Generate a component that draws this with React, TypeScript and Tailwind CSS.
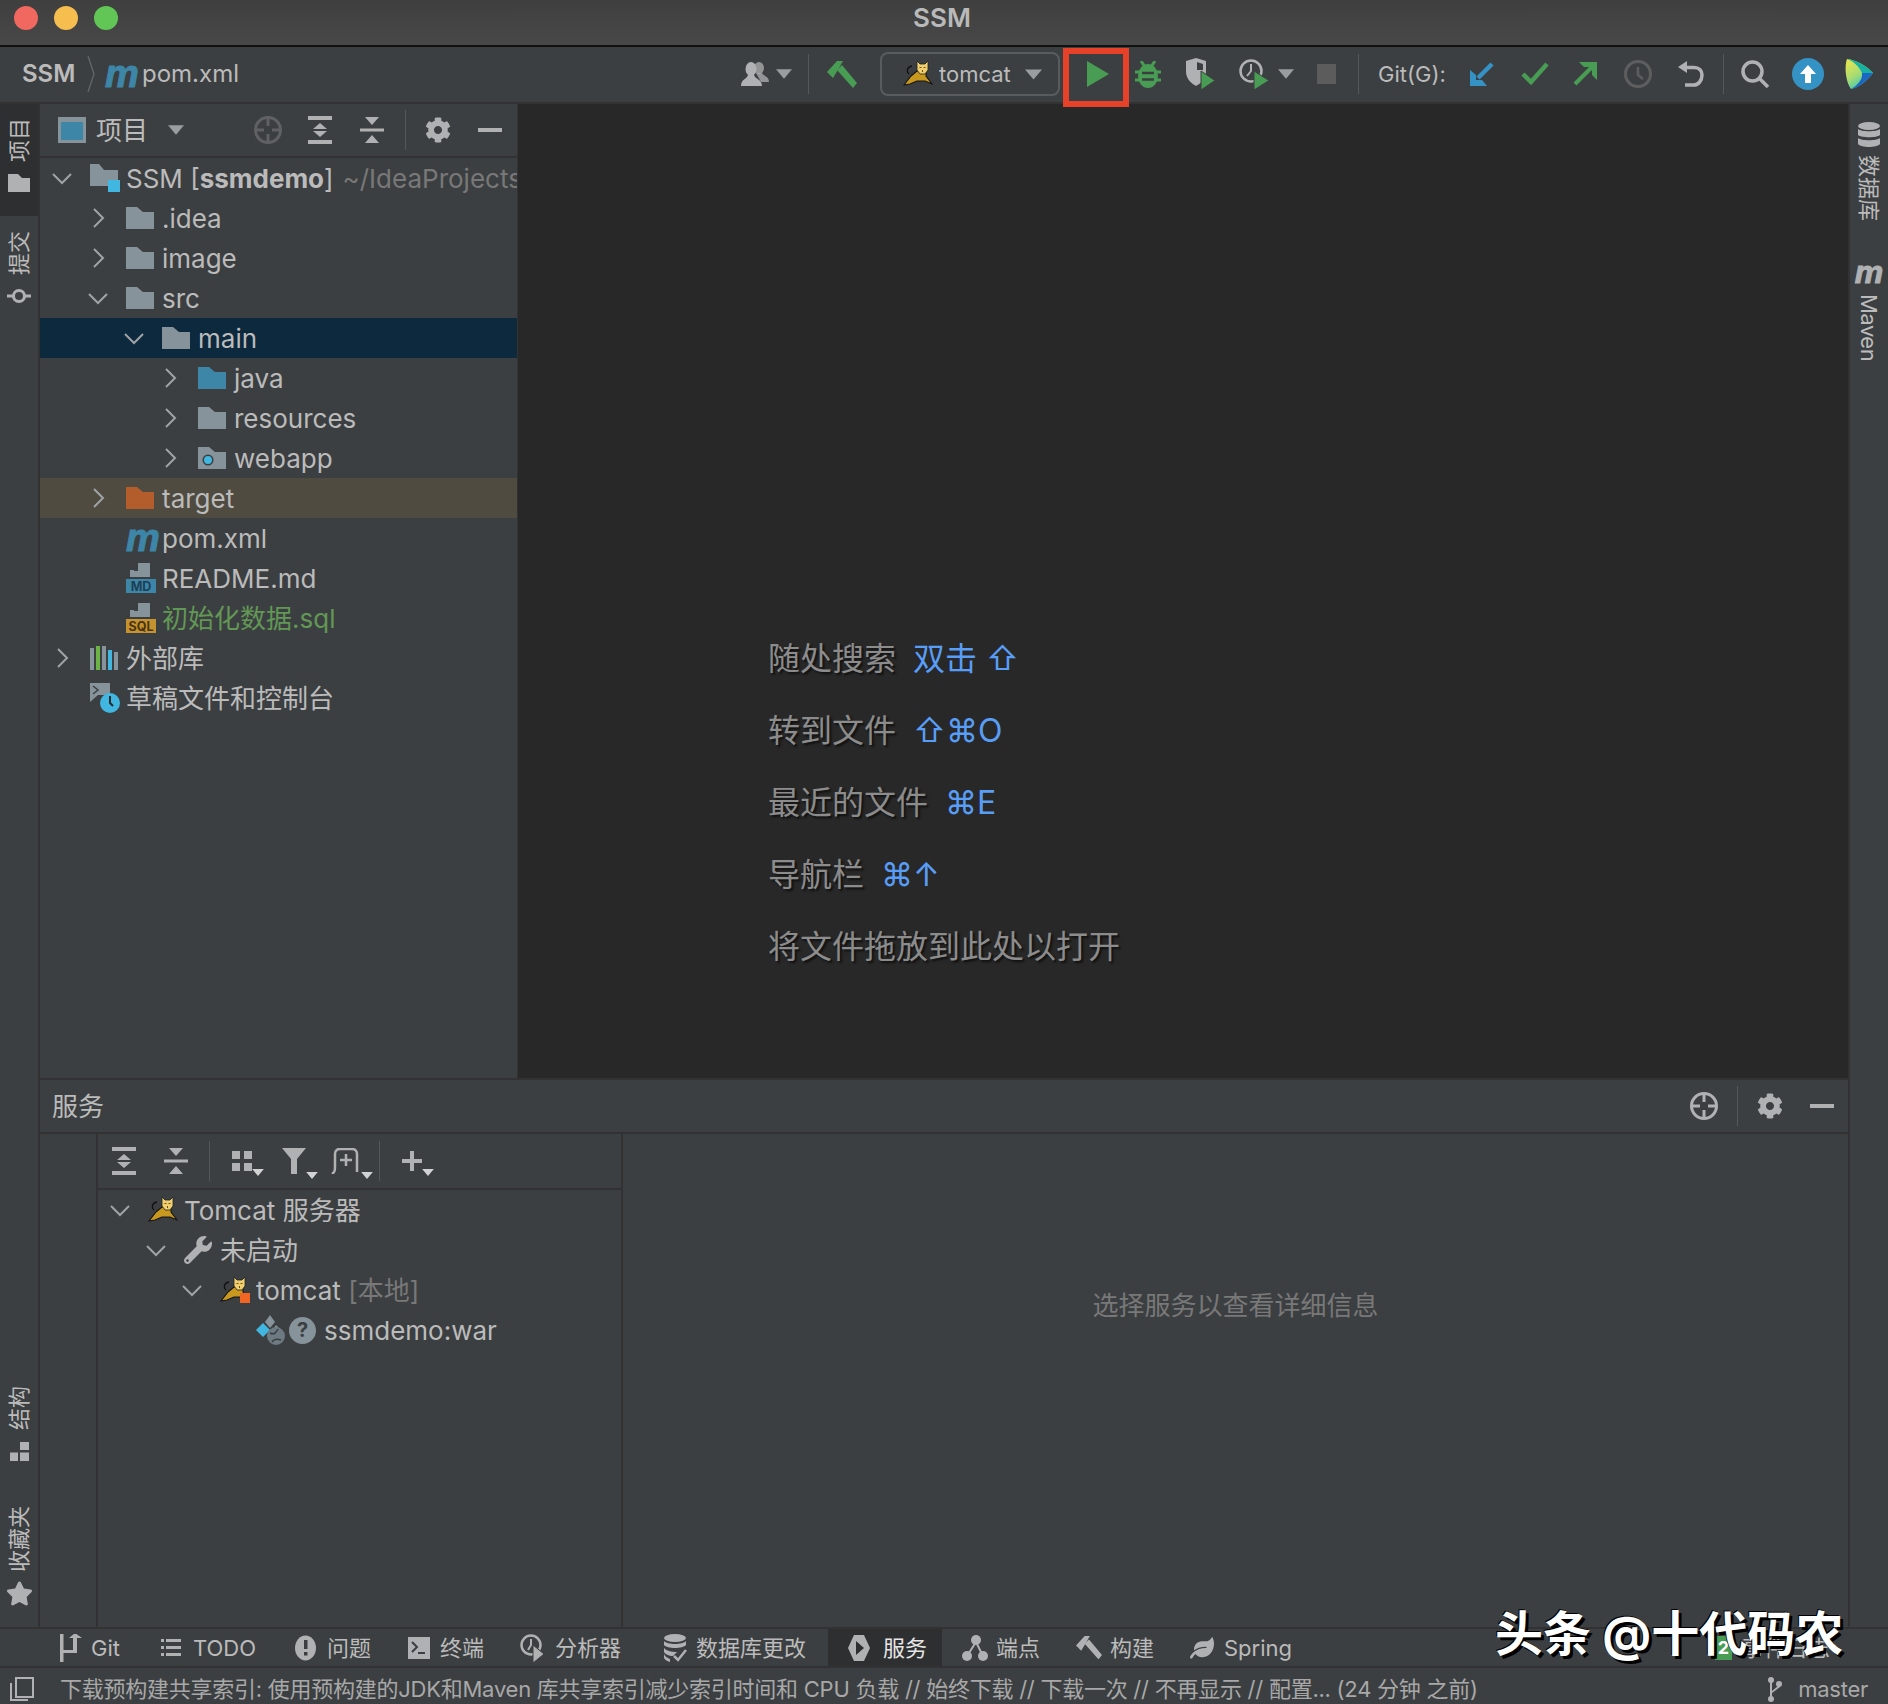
import React from 'react';
import { FaCog, FaWrench, FaStar, FaLeaf } from 'react-icons/fa';

const GRAY = '#afb1b3';
const GREEN = '#499c54';
const BLUE = '#3592c4';
const BG = '#3c3f41';
const FOLDER = '#87939a';

const vertical = '[writing-mode:vertical-rl] [text-orientation:sideways]';

const Folder = ({ color = FOLDER, badge }: { color?: string; badge?: boolean }) => (
  <svg width="28" height="22" viewBox="0 0 28 22">
    <path d="M0 0H11L17 5H28V22H0Z" fill={color} />
    {badge && <circle cx="10" cy="13" r="5.5" fill="#3a3d3f" />}
    {badge && <circle cx="10" cy="13" r="4" fill="#40b6e0" />}
  </svg>
);

const RootFolder = () => (
  <svg width="30" height="28" viewBox="0 0 30 28">
    <path d="M0 0H9L14 6H28V22H0Z" fill={FOLDER} />
    <rect x="18" y="16" width="12" height="12" fill="#40b6e0" />
  </svg>
);

const Chevron = ({ open }: { open?: boolean }) => (
  <svg width="20" height="20" viewBox="0 0 20 20" fill="none" stroke="#a0a3a6" strokeWidth="2">
    <path d={open ? 'M1 6L10 15L19 6' : 'M6 1L15 10L6 19'} />
  </svg>
);

const MavenM = ({ color = '#3d86a8', small }: { color?: string; small?: boolean }) => (
  <span
    className={`font-['Liberation_Sans'] leading-none font-bold italic [-webkit-text-stroke-width:1px] ${small ? 'text-[32px]' : 'text-[38px]'}`}
    style={{ color }}
  >
    m
  </span>
);

const FileBadge = ({ label, color, ink }: { label: string; color: string; ink: string }) => (
  <svg width="30" height="30" viewBox="0 0 30 30">
    <path d="M12 0H24V14H4V7H8V8H12Z" fill={FOLDER} />
    <rect x="0" y="16" width="30" height="14" fill={color} />
    <text x="15" y="27.5" textAnchor="middle" fontSize="12.5" fontWeight="700" fontFamily="Inter" fill={ink}>
      {label}
    </text>
  </svg>
);

const Tomcat = ({ stopped }: { stopped?: boolean }) => (
  <svg width="30" height="26" viewBox="0 0 30 26">
    <path d="M6 13C3 10 4 6 9 5" fill="none" stroke="#111" strokeWidth="1.4" />
    <path d="M1 24L8 15L14 10L23 10L23 15L29 23L22 20L14 20L7 23Z" fill="#c9981f" stroke="#151515" strokeWidth="1.1" />
    <path d="M14 0L17 3H22L25 0L25 9L22 13L17 13L14 9Z" fill="#f0cf6e" stroke="#222" strokeWidth="0.8" />
    <path d="M16.5 6.5h2M20.500 6.5h2M19.500 9v2" stroke="#6b4d10" strokeWidth="1" />
    {stopped && <rect x="20" y="16" width="10" height="10" fill="#f26522" />}
  </svg>
);

const Hammer = ({ color = GREEN, size = 30 }: { color?: string; size?: number }) => (
  <svg width={size} height={size * 0.9} viewBox="0 0 30 27" fill={color}>
    <path d="M0 11L10 0H16L12 7L6 17Z" />
    <path d="M10 9L15 4L30 22L26 27Z" />
  </svg>
);

const Person = () => (
  <svg width="28" height="24" viewBox="0 0 28 24" fill={GRAY}>
    <ellipse cx="18" cy="6" rx="5" ry="6" opacity="0.75" />
    <path d="M15 11H21C22 14 28 14 28 20H20Z" opacity="0.75" />
    <ellipse cx="10" cy="7" rx="5.5" ry="7" />
    <path d="M0 24C0 17 6 17 7 13H13C14 17 21 17 21 24Z" />
  </svg>
);

const Tri = ({ w = 17, h = 11, color = '#9a9da0' }: { w?: number; h?: number; color?: string }) => (
  <svg width={w} height={h} viewBox="0 0 10 6">
    <path d="M0 0H10L5 6Z" fill={color} />
  </svg>
);

const Bug = () => (
  <svg width="26" height="27" viewBox="0 0 26 27">
    <path d="M6 0L10 6M20 0L16 6" stroke={GREEN} strokeWidth="3" />
    <ellipse cx="13" cy="15" rx="10" ry="12" fill={GREEN} />
    <path d="M0 11H26M0 19H26" stroke={GREEN} strokeWidth="3" />
    <path d="M7 12H19M7 18.500H19" stroke={BG} strokeWidth="2.5" />
  </svg>
);

const Shield = () => (
  <svg width="32" height="32" viewBox="0 0 32 32">
    <path d="M1 3L11 0L21 3V14C21 21 15 26 11 28C7 26 1 21 1 14Z" fill={GRAY} />
    <path d="M12 4L18 6V12H12Z" fill={BG} />
    <path d="M16 13L30 22.500L16 32Z" fill={GREEN} stroke={BG} strokeWidth="1" />
  </svg>
);

const Profiler = () => (
  <svg className="shrink-0" width="32" height="32" viewBox="0 0 32 32" fill="none">
    <circle cx="12" cy="13" r="10.500" stroke={GRAY} strokeWidth="2.500" />
    <path d="M12 6V13L8 18" stroke={GRAY} strokeWidth="2" />
    <path d="M15 13L30 22.500L15 32Z" fill={GREEN} stroke={BG} strokeWidth="1" />
  </svg>
);

const Crosshair = ({ color, size = 28 }: { color: string; size?: number }) => (
  <svg width={size} height={size} viewBox="0 0 28 28" fill="none" stroke={color} strokeWidth="3">
    <circle cx="14" cy="14" r="12.500" />
    <path d="M14 2V10M14 18V26M2 14H10M18 14H26" />
  </svg>
);

const ExpandAll = () => (
  <svg width="24" height="28" viewBox="0 0 24 28" fill={GRAY}>
    <rect width="24" height="4" />
    <rect y="24" width="24" height="4" />
    <path d="M12 7L19 13H5ZM12 21L5 15H19Z" />
  </svg>
);

const CollapseAll = () => (
  <svg width="24" height="26" viewBox="0 0 24 26" fill={GRAY}>
    <rect y="11.500" width="24" height="3" />
    <path d="M5 0H19L12 8ZM12 18L19 26H5Z" />
  </svg>
);

const Minus = () => <div className="h-[4px] w-[24px] bg-[#afb1b3]" />;
const Divider = ({ h = 'h-[40px]' }: { h?: string }) => <div className={`w-px bg-[#55585a] ${h}`} />;

const ArrowDownLeft = () => (
  <svg width="26" height="26" viewBox="0 0 26 26" fill={BLUE}>
    <path d="M1 9L7 14V19H13L18 25H1Z" />
    <path d="M9 17L23 3" stroke={BLUE} strokeWidth="4.500" />
  </svg>
);

const Check = () => (
  <svg width="28" height="24" viewBox="0 0 28 24" fill="none" stroke={GREEN} strokeWidth="4.500">
    <path d="M2 12L10 20L26 2" />
  </svg>
);

const ArrowUpRight = () => (
  <svg width="24" height="24" viewBox="0 0 24 24" fill={GREEN}>
    <path d="M6 0H24V18L19 13V5H11Z" />
    <path d="M20 4L2 22" stroke={GREEN} strokeWidth="4" />
  </svg>
);

const History = () => (
  <svg width="28" height="28" viewBox="0 0 28 28" fill="none" stroke="#5c5e60" strokeWidth="3">
    <circle cx="14" cy="14" r="12.500" />
    <path d="M14 7V15L19 19" strokeWidth="2.500" />
  </svg>
);

const Revert = () => (
  <svg width="26" height="27" viewBox="0 0 26 27" fill="none">
    <path d="M9 0V12L0 6Z" fill={GRAY} />
    <path d="M8 6.500H16C21 6.500 24 9.500 24 14C24 20 20 24 16 24H7" stroke={GRAY} strokeWidth="3.500" />
  </svg>
);

const Search = () => (
  <svg width="28" height="28" viewBox="0 0 28 28" fill="none" stroke={GRAY} strokeWidth="3.500">
    <circle cx="11.500" cy="11.500" r="9.500" />
    <path d="M18 18L27 27" />
  </svg>
);

const Upload = () => (
  <svg width="32" height="32" viewBox="0 0 32 32">
    <circle cx="16" cy="16" r="16" fill={BLUE} />
    <path d="M16 7L24 16H19V25H13V16H8Z" fill="#fff" />
  </svg>
);

const LensLogo = () => (
  <svg width="28" height="30" viewBox="0 0 28 30">
    <defs>
      <linearGradient id="lens" x1="0" y1="0" x2="0.6" y2="1">
        <stop offset="0" stopColor="#f0e64a" />
        <stop offset="0.55" stopColor="#a8dc72" />
        <stop offset="1" stopColor="#2fc4bc" />
      </linearGradient>
    </defs>
    <path d="M2 0C11 1 22 7 28 14C22 22 13 29 6 30C1 24 -1 8 2 0Z" fill="url(#lens)" />
    <path d="M2 0C11 1 22 7 28 14H17C14 7 8 2 2 0Z" fill="#16b1a0" />
    <path d="M28 14C22 22 13 29 6 30C13 26 18 20 17 14Z" fill="#1a67c4" />
  </svg>
);

const Row = ({
  d,
  chevron,
  icon,
  iconW = 'w-[36px]',
  bg = '',
  children,
}: {
  d: number;
  chevron?: 'open' | 'closed';
  icon: React.ReactNode;
  iconW?: string;
  bg?: string;
  children: React.ReactNode;
}) => (
  <div className={`flex h-10 items-center overflow-hidden whitespace-nowrap ${bg}`} style={{ paddingLeft: 12 + 36 * d }}>
    <div className="w-[38px] shrink-0">{chevron && <Chevron open={chevron === 'open'} />}</div>
    <div className={`flex shrink-0 items-center ${iconW}`}>{icon}</div>
    <div className="text-[26px] text-[#bbbbbb]">{children}</div>
  </div>
);

const Slot = ({ w, children }: { w: string; children?: React.ReactNode }) => (
  <div className={`flex shrink-0 items-center justify-center ${w}`}>{children}</div>
);

const WithTri = ({ children }: { children: React.ReactNode }) => (
  <div className="relative">
    {children}
    <div className="absolute right-[-12px] bottom-[-5px]">
      <Tri w={12} h={7} color="#d0d2d4" />
    </div>
  </div>
);

const Hint = ({ label, children }: { label: string; children?: React.ReactNode }) => (
  <div className="flex h-[72px] items-center gap-[17px] whitespace-nowrap">
    <span className="text-[32px] text-[#8c8c8c] [text-shadow:2px_2px_2px_#111]">{label}</span>
    {children && <span className="text-[32px] text-[#589df6]">{children}</span>}
  </div>
);

function Gray2Profiler() {
  return (
    <svg width="24" height="30" viewBox="0 0 24 30" fill="none">
      <circle cx="11" cy="12" r="9.500" stroke={GRAY} strokeWidth="2.500" />
      <path d="M11 6V12L8 17" stroke={GRAY} strokeWidth="2" />
      <path d="M13 12L24 21L13 30Z" fill={GRAY} stroke={BG} strokeWidth="1" />
    </svg>
  );
}

const tabs: { w: string; iconW: string; label: string; icon: React.ReactNode; active?: boolean }[] = [
  {
    w: 'w-[101px]',
    iconW: 'w-[31px]',
    label: 'Git',
    icon: (
      <svg width="24" height="28" viewBox="0 0 24 28" fill={GRAY}>
        <rect width="3.500" height="28" />
        <path d="M3 16H13V4H9L15 -1L22 4H17V19H3Z" />
      </svg>
    ),
  },
  {
    w: 'w-[134px]',
    iconW: 'w-[32px]',
    label: 'TODO',
    icon: (
      <svg width="20" height="18" viewBox="0 0 20 18" fill={GRAY}>
        <path d="M0 0H3V3H0ZM5 0H20V3H5ZM0 7H3V10H0ZM5 7H20V10H5ZM0 14H3V17H0ZM5 14H20V17H5Z" />
      </svg>
    ),
  },
  {
    w: 'w-[113px]',
    iconW: 'w-[32px]',
    label: '问题',
    icon: (
      <svg width="21" height="26" viewBox="0 0 21 26">
        <ellipse cx="10.500" cy="13" rx="10.500" ry="12.500" fill={GRAY} />
        <rect x="9" y="5" width="3.500" height="9" fill={BG} />
        <rect x="9" y="17" width="3.500" height="3.500" fill={BG} />
      </svg>
    ),
  },
  {
    w: 'w-[112px]',
    iconW: 'w-[32px]',
    label: '终端',
    icon: (
      <svg width="22" height="22" viewBox="0 0 22 22">
        <rect width="22" height="22" fill={GRAY} />
        <path d="M4 5L9 10L4 15" fill="none" stroke={BG} strokeWidth="2" />
        <rect x="10" y="15" width="7" height="2" fill={BG} />
      </svg>
    ),
  },
  { w: 'w-[143px]', iconW: 'w-[35px]', label: '分析器', icon: <Gray2Profiler /> },
  {
    w: 'w-[185px]',
    iconW: 'w-[33px]',
    label: '数据库更改',
    icon: (
      <svg width="24" height="28" viewBox="0 0 24 28" fill={GRAY}>
        <ellipse cx="12" cy="4" rx="11" ry="4" />
        <path d="M1 7C4 11 20 11 23 7V11C20 15 4 15 1 11ZM1 14C4 18 12 18 14 18L10 22C6 22 2 20 1 18ZM1 20C2 23 5 24 7 25V28C4 27 2 26 1 24Z" />
        <path d="M11 22L15 26L23 16" fill="none" stroke={GRAY} strokeWidth="2.500" />
      </svg>
    ),
  },
  {
    w: 'w-[114px]',
    iconW: 'w-[35px]',
    label: '服务',
    active: true,
    icon: (
      <svg width="22" height="26" viewBox="0 0 22 26">
        <path d="M6 0H16L22 13L16 26H6L0 13Z" fill={GRAY} />
        <path d="M8 6L16 13L8 20Z" fill="#2e2f31" />
      </svg>
    ),
  },
  {
    w: 'w-[114px]',
    iconW: 'w-[34px]',
    label: '端点',
    icon: (
      <svg width="26" height="28" viewBox="0 0 26 28" fill={GRAY}>
        <circle cx="14" cy="6" r="5" />
        <circle cx="5" cy="22" r="5" />
        <circle cx="21" cy="22" r="5" />
        <path d="M14 8L5 22M14 8L21 22" stroke={GRAY} strokeWidth="2" />
      </svg>
    ),
  },
  { w: 'w-[114px]', iconW: 'w-[34px]', label: '构建', icon: <Hammer color={GRAY} size={26} /> },
  { w: 'w-[140px]', iconW: 'w-[34px]', label: 'Spring', icon: <FaLeaf size={24} color={GRAY} /> },
];

export default function App() {
  return (
    <div className="relative flex h-[1704px] w-[1888px] flex-col overflow-hidden bg-[#3c3f41] font-['Inter','Noto_Sans_CJK_SC',sans-serif] text-[#bbbbbb]">
      {/* Title bar */}
      <div className="flex h-[47px] shrink-0 items-center border-b-2 border-[#111] bg-linear-to-b from-[#3f3f3f] to-[#474847] pb-[10px]">
        <div className="ml-[14px] flex gap-[16px]">
          <div className="h-6 w-6 rounded-full bg-[#f0685f]" />
          <div className="h-6 w-6 rounded-full bg-[#f6bd4f]" />
          <div className="h-6 w-6 rounded-full bg-[#61c655]" />
        </div>
        <div className="flex-1 pr-[122px] text-center text-[26px] font-semibold text-[#b9b9b9]">SSM</div>
      </div>

      {/* Main toolbar */}
      <div className="flex h-[57px] shrink-0 items-center border-b-2 border-[#323232] pb-[1px]">
        <div className="ml-[22px] flex w-[718px] items-center">
          <span className="w-[55px] text-[24px] font-semibold text-[#bbbbbb]">SSM</span>
          <svg className="ml-[10px]" width="8" height="36" viewBox="0 0 8 36" fill="none" stroke="#5f6365" strokeWidth="1.500">
            <path d="M1 0L7 18L1 36" />
          </svg>
          <div className="ml-[10px] w-[37px] leading-none">
            <MavenM />
          </div>
          <span className="text-[24px] text-[#bbbbbb]">pom.xml</span>
        </div>
        <Slot w="w-[30px]"><Person /></Slot>
        <Slot w="w-[28px]"><Tri w={16} h={10} /></Slot>
        <div className="ml-[10px]"><Divider /></div>
        <Slot w="w-[66px]"><Hammer /></Slot>
        <div className="ml-[5px] flex h-[44px] w-[180px] shrink-0 items-center rounded-[8px] border-2 border-[#595c5e] pl-[21px]">
          <Tomcat />
          <span className="ml-[6px] text-[22px] text-[#bbbbbb]">tomcat</span>
          <div className="ml-[14px]"><Tri w={17} h={11} /></div>
        </div>
        <div className="relative ml-[3px] flex w-[70px] shrink-0 items-center justify-center">
          <svg width="22" height="26" viewBox="0 0 22 26"><path d="M0 0L22 13L0 26Z" fill={GREEN} /></svg>
          <div className="absolute top-[-13px] left-0 z-10 h-[59px] w-[66px] border-[6px] border-[#e8412a]" />
        </div>
        <Slot w="w-[30px]"><Bug /></Slot>
        <Slot w="w-[76px]"><Shield /></Slot>
        <Slot w="w-[32px]"><Profiler /></Slot>
        <Slot w="w-[30px]"><Tri w={16} h={10} /></Slot>
        <Slot w="w-[50px]"><div className="h-[20px] w-[19px] bg-[#5c5c5c]" /></Slot>
        <div className="ml-[7px]"><Divider /></div>
        <span className="ml-[19px] w-[69px] shrink-0 text-[22px] whitespace-nowrap text-[#bbbbbb]">Git(G):</span>
        <Slot w="w-[70px]"><ArrowDownLeft /></Slot>
        <Slot w="w-[36px]"><Check /></Slot>
        <Slot w="w-[64px]"><ArrowUpRight /></Slot>
        <Slot w="w-[42px]"><History /></Slot>
        <Slot w="w-[64px]"><Revert /></Slot>
        <Divider />
        <Slot w="w-[62px]"><Search /></Slot>
        <Slot w="w-[44px]"><Upload /></Slot>
        <Slot w="w-[58px]"><LensLogo /></Slot>
      </div>

      <div className="flex min-h-0 flex-1">
        {/* Left stripe */}
        <div className="flex w-[40px] shrink-0 flex-col border-r-2 border-[#323232]">
          <div className="flex h-[112px] flex-col items-center bg-[#2e2f31] pt-[14px]">
            <span className={`${vertical} rotate-180 text-[22px] leading-none`}>项目</span>
            <svg className="mt-[12px]" width="22" height="18" viewBox="0 0 22 18">
              <path d="M0 0H10L14 4H22V18H0Z" fill={GRAY} />
            </svg>
          </div>
          <div className="flex flex-col items-center pt-[15px]">
            <span className={`${vertical} rotate-180 text-[22px] leading-none`}>提交</span>
            <svg className="mt-[12px]" width="24" height="18" viewBox="0 0 24 18" fill="none" stroke={GRAY} strokeWidth="3">
              <circle cx="12" cy="9" r="5.500" />
              <path d="M0 9H6M18 9H24" />
            </svg>
          </div>
          <div className="mt-auto flex flex-col items-center pb-[20px]">
            <span className={`${vertical} rotate-180 text-[22px] leading-none`}>结构</span>
            <svg className="mt-[12px]" width="19" height="19" viewBox="0 0 19 19" fill={GRAY}>
              <path d="M10 0H19V8H10ZM0 10.500H8V19H0ZM10 10.500H19V19H10Z" />
            </svg>
            <span className={`${vertical} mt-[45px] rotate-180 text-[22px] leading-none`}>收藏夹</span>
            <FaStar className="mt-[8px]" size={27} color={GRAY} />
          </div>
        </div>

        <div className="flex min-w-0 flex-1 flex-col">
          {/* Project + editor */}
          <div className="flex h-[976px] shrink-0 border-b-2 border-[#323232]">
            <div className="w-[478px] shrink-0 border-r border-[#323232]">
              <div className="flex h-[54px] items-center justify-between border-b-2 border-[#323232]">
                <div className="ml-[18px] flex items-center">
                  <div className="h-[26px] w-[28px] border-[3px] border-t-[5px] border-[#87939a] bg-[#3d86a8]" />
                  <span className="ml-[10px] text-[26px]">项目</span>
                  <div className="ml-[20px]"><Tri w={16} h={10} /></div>
                </div>
                <div className="flex items-center">
                  <Slot w="w-[52px]"><Crosshair color="#5f6163" /></Slot>
                  <Slot w="w-[52px]"><ExpandAll /></Slot>
                  <Slot w="w-[52px]"><CollapseAll /></Slot>
                  <div className="ml-[7px] mr-[7px]"><Divider /></div>
                  <Slot w="w-[50px]"><FaCog size={26} color={GRAY} /></Slot>
                  <Slot w="w-[54px]"><Minus /></Slot>
                </div>
              </div>
              <Row d={0} chevron="open" icon={<RootFolder />}>
                SSM [<b className="font-bold">ssmdemo</b>]<span className="ml-[9px] text-[#787878]">~/IdeaProjects/SSM</span>
              </Row>
              <Row d={1} chevron="closed" icon={<Folder />}>.idea</Row>
              <Row d={1} chevron="closed" icon={<Folder />}>image</Row>
              <Row d={1} chevron="open" icon={<Folder />}>src</Row>
              <Row d={2} chevron="open" icon={<Folder />} bg="bg-[#0d293e]">main</Row>
              <Row d={3} chevron="closed" icon={<Folder color="#3d86a8" />}>java</Row>
              <Row d={3} chevron="closed" icon={<Folder />}>resources</Row>
              <Row d={3} chevron="closed" icon={<Folder badge />}>webapp</Row>
              <Row d={1} chevron="closed" icon={<Folder color="#b35c2c" />} bg="bg-[#4f4b41]">target</Row>
              <Row d={1} icon={<MavenM />}>pom.xml</Row>
              <Row d={1} icon={<FileBadge label="MD" color="#3d86a8" ink="#1d3f55" />}>README.md</Row>
              <Row d={1} icon={<FileBadge label="SQL" color="#c4922e" ink="#4a3410" />}>
                <span className="text-[#629755]">初始化数据.sql</span>
              </Row>
              <Row
                d={0}
                chevron="closed"
                icon={
                  <svg width="28" height="24" viewBox="0 0 28 24">
                    <rect x="0" y="2" width="4" height="22" fill={FOLDER} />
                    <rect x="6" y="0" width="4" height="24" fill="#6ab344" />
                    <rect x="12" y="0" width="4" height="24" fill={FOLDER} />
                    <rect x="18" y="4" width="4" height="20" fill="#40b6e0" />
                    <rect x="24" y="6" width="4" height="18" fill={FOLDER} />
                  </svg>
                }
              >
                外部库
              </Row>
              <Row
                d={0}
                icon={
                  <svg width="30" height="30" viewBox="0 0 30 30">
                    <path d="M0 0H20V12H8L0 19Z" fill={FOLDER} />
                    <path d="M3 3L8 7L3 11" fill="none" stroke={BG} strokeWidth="1.500" />
                    <circle cx="20" cy="20" r="10" fill="#40b6e0" />
                    <path d="M20 13V20L23 23" fill="none" stroke="#2b2b2b" strokeWidth="2" />
                  </svg>
                }
              >
                草稿文件和控制台
              </Row>
            </div>
            <div className="min-w-0 flex-1 bg-[#282828] pt-[519px] pl-[250px]">
              <Hint label="随处搜索">双击 ⇧</Hint>
              <Hint label="转到文件">⇧⌘O</Hint>
              <Hint label="最近的文件">⌘E</Hint>
              <Hint label="导航栏">⌘↑</Hint>
              <Hint label="将文件拖放到此处以打开" />
            </div>
          </div>

          {/* Services */}
          <div className="flex min-h-0 flex-1 flex-col">
            <div className="flex h-[54px] shrink-0 items-center border-b-2 border-[#323232]">
              <span className="ml-[12px] text-[26px]">服务</span>
              <div className="ml-auto flex items-center">
                <Slot w="w-[66px]"><Crosshair color={GRAY} /></Slot>
                <Divider />
                <div className="w-[6px]" />
                <Slot w="w-[52px]"><FaCog size={26} color={GRAY} /></Slot>
                <Slot w="w-[52px]"><Minus /></Slot>
              </div>
            </div>
            <div className="flex min-h-0 flex-1">
              <div className="w-[58px] shrink-0 border-r-2 border-[#323232]" />
              <div className="flex w-[525px] shrink-0 flex-col border-r-2 border-[#323232]">
                <div className="flex h-[56px] shrink-0 items-center border-b-2 border-[#323232]">
                  <Slot w="w-[52px]"><ExpandAll /></Slot>
                  <Slot w="w-[52px]"><CollapseAll /></Slot>
                  <div className="ml-[7px]"><Divider /></div>
                  <Slot w="mr-[3px] w-[63px]">
                    <WithTri>
                      <svg width="20" height="20" viewBox="0 0 20 20" fill={GRAY}>
                        <path d="M0 0H8V8H0ZM12 0H20V8H12ZM0 12H8V20H0ZM12 12H20V20H12Z" />
                      </svg>
                    </WithTri>
                  </Slot>
                  <Slot w="w-[36px]">
                    <WithTri>
                      <svg width="24" height="26" viewBox="0 0 24 26" fill={GRAY}>
                        <path d="M0 0H24L15 11V26H9V11Z" />
                      </svg>
                    </WithTri>
                  </Slot>
                  <Slot w="w-[67px]">
                    <WithTri>
                      <svg width="30" height="26" viewBox="0 0 30 26" fill="none" stroke={GRAY} strokeWidth="2.500">
                        <path d="M1 26C4 24 4 22 4 18V6C4 3 6 1 9 1H21C24 1 26 3 26 6V24" />
                        <path d="M15 6V18M9 12H21" />
                      </svg>
                    </WithTri>
                  </Slot>
                  <Divider />
                  <Slot w="w-[64px]">
                    <WithTri>
                      <svg width="20" height="20" viewBox="0 0 20 20" fill={GRAY}>
                        <path d="M8 0H12V8H20V12H12V20H8V12H0V8H8Z" />
                      </svg>
                    </WithTri>
                  </Slot>
                </div>
                <Row d={0} chevron="open" icon={<Tomcat />}>Tomcat 服务器</Row>
                <Row d={1} chevron="open" icon={<FaWrench size={28} color={GRAY} />}>未启动</Row>
                <Row d={2} chevron="open" icon={<Tomcat stopped />}>
                  tomcat <span className="text-[#787878]">[本地]</span>
                </Row>
                <Row
                  d={3}
                  iconW="w-[68px]"
                  icon={
                    <div className="flex items-center gap-[3px]">
                      <svg width="30" height="30" viewBox="0 0 30 30">
                        <path d="M14 0L19 7L14 13L9 7Z" fill={FOLDER} />
                        <path d="M7 8L14 15L7 22L0 15Z" fill="#40b6e0" />
                        <path d="M20 10L28 18H14Z" fill={FOLDER} />
                        <circle cx="20" cy="21" r="9" fill="#6d7a82" />
                        <path d="M14 18C18 20 20 18 22 14M16 27C18 24 22 24 25 25" fill="none" stroke={BG} strokeWidth="1.500" />
                      </svg>
                      <div className="flex h-[27px] w-[27px] items-center justify-center rounded-full bg-[#87939a] text-[20px] leading-none font-bold text-[#3c3f41]">
                        ?
                      </div>
                    </div>
                  }
                >
                  ssmdemo:war
                </Row>
              </div>
              <div className="min-w-0 flex-1 pt-[152px] text-center text-[26px] text-[#787878]">选择服务以查看详细信息</div>
            </div>
          </div>
        </div>

        {/* Right stripe */}
        <div className="flex w-[40px] shrink-0 flex-col items-center border-l-2 border-[#323232] pt-[18px]">
          <svg width="22" height="26" viewBox="0 0 22 26" fill={GRAY}>
            <ellipse cx="11" cy="4" rx="11" ry="4" />
            <path d="M0 7C3 10 19 10 22 7V13C19 16 3 16 0 13ZM0 16C3 19 19 19 22 16V22C19 26 3 26 0 22Z" />
          </svg>
          <span className={`${vertical} mt-[7px] text-[22px] leading-none`}>数据库</span>
          <div className="mt-[35px] leading-none">
            <MavenM color={GRAY} small />
          </div>
          <span className={`${vertical} mt-[6px] text-[22px] leading-none tracking-[-0.5px]`}>Maven</span>
        </div>
      </div>

      {/* Tool window bar */}
      <div className="flex h-[41px] shrink-0 border-t-2 border-b-2 border-t-[#323232] border-b-[#323232] pl-[40px] text-[22px] leading-none">
        {tabs.map((t) => (
          <div key={t.label} className={`flex h-full shrink-0 items-center pl-[20px] ${t.w} ${t.active ? 'bg-[#2e2f31] text-[#e6e6e6]' : ''}`}>
            <div className={`flex shrink-0 items-center ${t.iconW}`}>{t.icon}</div>
            <span>{t.label}</span>
          </div>
        ))}
        <div className="ml-auto flex items-center pr-[58px]">
          <div className="flex h-[24px] w-[17px] items-center justify-center bg-[#499c54] text-[18px] font-bold text-white">2</div>
          <span className="ml-[10px]">事件日志</span>
        </div>
      </div>

      {/* Status bar */}
      <div className="flex h-[36px] shrink-0 items-center pt-[6px] text-[22px] leading-none tracking-[-0.25px] whitespace-nowrap text-[#a8a8a8]">
        <svg className="ml-[10px]" width="24" height="24" viewBox="0 0 24 24" fill="none" stroke={GRAY} strokeWidth="2">
          <rect x="6" y="1" width="17" height="19" />
          <path d="M1 6V23H18" />
        </svg>
        <span className="ml-[26px]">下载预构建共享索引: 使用预构建的JDK和Maven 库共享索引减少索引时间和 CPU 负载 // 始终下载 // 下载一次 // 不再显示 // 配置... (24 分钟 之前)</span>
        <div className="ml-auto flex items-center pr-[20px]">
          <svg width="14" height="26" viewBox="0 0 14 26" fill={GRAY}>
            <circle cx="3" cy="4" r="3" />
            <circle cx="11" cy="8" r="3" />
            <circle cx="3" cy="23" r="3" />
            <path d="M2 4H4V23H2ZM10 8H12V11L4 17V15L10 10Z" />
          </svg>
          <span className="ml-[16px]">master</span>
        </div>
      </div>

      {/* Watermark */}
      <div className="absolute top-[1604px] left-[1495px] z-20 text-[48px] leading-[60px] font-bold whitespace-nowrap text-white [text-shadow:3px_3px_0_#000,-1px_-1px_0_#000]">
        头条 @十代码农
      </div>
    </div>
  );
}
